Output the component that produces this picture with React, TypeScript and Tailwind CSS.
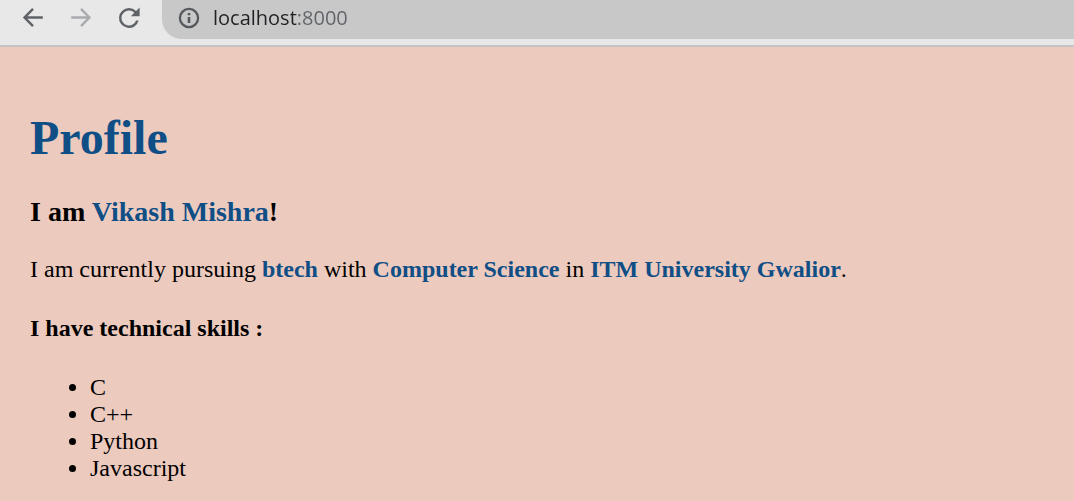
import React, { useState } from "react";

function BackIcon() {
  return (
    <svg width="22" height="20" viewBox="0 0 22 20" fill="none" stroke="currentColor" strokeWidth="2.500">
      <path d="M20.800 9.500H3M11 0.900L2.600 9.500L11 18.100" />
    </svg>
  );
}

function ForwardIcon() {
  return (
    <svg width="22" height="20" viewBox="0 0 22 20" fill="none" stroke="currentColor" strokeWidth="2.500">
      <path d="M0.200 9.500H18M10 0.900L18.400 9.500L10 18.100" />
    </svg>
  );
}

function ReloadIcon() {
  return (
    <svg width="30" height="30" viewBox="0 0 24 24" fill="currentColor">
      <path d="M17.650 6.350A7.960 7.960 0 0 0 12 4a8 8 0 1 0 7.730 10h-2.080A6 6 0 1 1 12 6c1.660 0 3.140.69 4.220 1.780L13.500 10.500H20.500V3.600z" />
    </svg>
  );
}

function InfoIcon() {
  return (
    <svg width="22" height="22" viewBox="0 0 22 22" fill="none" stroke="currentColor">
      <circle cx="11" cy="11" r="9.100" strokeWidth="2.300" />
      <path d="M11 10v6M11 6v2.300" strokeWidth="2.600" />
    </svg>
  );
}

const skills = ["C", "C++", "Python", "Javascript"];

function Accent({ children }: { children: React.ReactNode }) {
  return <b className="font-bold text-[#104e86]">{children}</b>;
}

export default function App() {
  const [address, setAddress] = useState("localhost:8000");
  return (
    <div className="flex min-h-screen flex-col bg-[#edcabe]">
      <header className="flex h-[47px] items-start border-b-2 border-[#c4c4c4] bg-[#e8e8e8]">
        <nav className="flex h-9 w-[162px] shrink-0 items-center text-[#5f6368]">
          <button aria-label="Back" className="ml-[22px] w-[22px]"><BackIcon /></button>
          <button aria-label="Forward" disabled className="ml-[27px] w-[22px] text-[#a9abae]"><ForwardIcon /></button>
          <button aria-label="Reload" className="ml-[21px] w-[30px]"><ReloadIcon /></button>
        </nav>
        <div className="flex h-[39px] grow items-center rounded-bl-[20px] bg-[#c8c8c8] pb-1 pl-4 text-[#55585c]">
          <InfoIcon />
          {/* The host is darker than the port. */}
          <input
            aria-label="Address"
            value={address}
            onChange={(event) => setAddress(event.target.value)}
            className="ml-[13px] min-w-0 grow bg-[linear-gradient(to_right,#202124_84px,#5f6368_84px)] bg-clip-text font-['Open_Sans',sans-serif] text-xl text-transparent caret-[#202124] outline-none"
          />
        </div>
      </header>
      <main className="px-[30px] pt-16 font-['Liberation_Serif',serif] text-2xl leading-[27px] text-black">
        <h1 className="text-5xl leading-[54px] font-bold text-[#104e86]">Profile</h1>
        <h2 className="mt-[31px] text-[28px] leading-8 font-bold">I am <Accent>Vikash Mishra</Accent>!</h2>
        <p className="mt-7">I am currently pursuing <Accent>btech</Accent> with <Accent>Computer Science</Accent> in <Accent>ITM University Gwalior</Accent>.</p>
        <h3 className="mt-8 font-bold">I have technical skills :</h3>
        <ul className="mt-8 list-disc pl-[60px]">
          {skills.map((skill) => <li key={skill}>{skill}</li>)}
        </ul>
      </main>
    </div>
  );
}
